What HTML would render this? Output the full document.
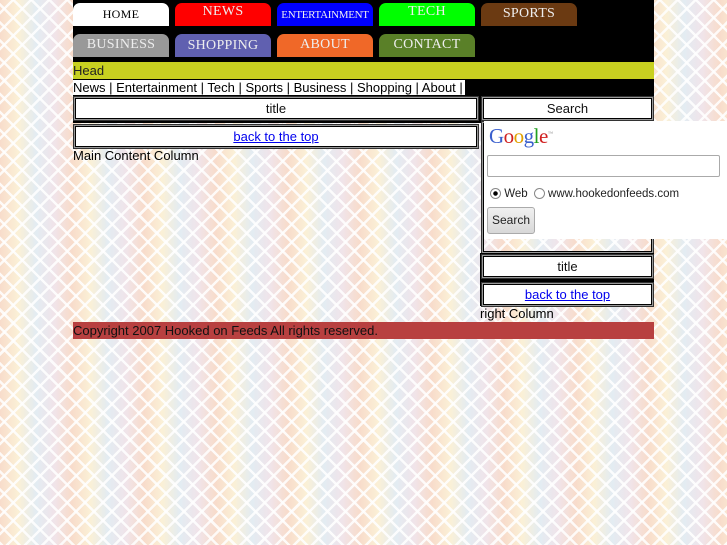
<!DOCTYPE html>
<html><head><style>
body{margin:0;width:727px;height:545px;overflow:hidden;font-family:"Liberation Sans",sans-serif;font-size:13px;
background-color:#f9ebe0;
background-image:repeating-linear-gradient(45deg,rgba(255,255,255,.85) 0 2.5px,transparent 2.5px 12.7px),repeating-linear-gradient(-45deg,rgba(255,255,255,.85) 0 2.5px,transparent 2.5px 12.7px),linear-gradient(90deg,#f8dccb,#fbf0d6,#e3ecf2,#f0e4ea,#f8dccb);
background-size:auto,auto,72px 72px;}
.wrap{position:absolute;left:73px;top:0;width:581px;}
.top{background:#000;height:62px;position:relative}
.tab{position:absolute;width:96px;height:23px;border-radius:7px 7px 0 0;font-family:"Liberation Serif",serif;color:#eee;text-align:center;font-size:14px;line-height:22px;letter-spacing:.3px;white-space:nowrap;overflow:hidden}
.head{background:#c8d020;height:17px;line-height:17px;color:#222}
.nav{background:#000;height:18px;line-height:18px}
.nav span{background:#fff;color:#000;padding-right:2px}
.box{position:absolute;background:#fff;border:1px solid #000;box-shadow:0 0 0 1px #999;outline:1px solid #333;outline-offset:1px;text-align:center;line-height:19px;color:#111}
a{color:#00e;}
</style></head><body>
<div class="wrap">
<div class="top">
<div class="tab" style="left:0;top:3px;background:#fff;color:#000;font-size:12px">HOME</div>
<div class="tab" style="left:102px;top:3px;background:#f00;line-height:18px">NEWS</div>
<div class="tab" style="left:204px;top:3px;background:#00f;font-size:11px;line-height:24px;letter-spacing:-.3px">ENTERTAINMENT</div>
<div class="tab" style="left:306px;top:3px;background:#0f0;line-height:18px">TECH</div>
<div class="tab" style="left:408px;top:3px;background:#6b3a12">SPORTS</div>
<div class="tab" style="left:0;top:34px;background:#999">BUSINESS</div>
<div class="tab" style="left:102px;top:34px;background:#6060b0;line-height:24px">SHOPPING</div>
<div class="tab" style="left:204px;top:34px;background:#f06828">ABOUT</div>
<div class="tab" style="left:306px;top:34px;background:#5a8028">CONTACT</div>
</div>
<div class="head">Head</div>
<div class="nav"><span>News | Entertainment | Tech | Sports | Business | Shopping | About |</span></div>
<div style="position:absolute;top:96px;left:0;width:581px;height:27px;background:#000"></div>
<div class="box" style="left:2px;top:98px;width:400px;height:19px">title</div>
<div class="box" style="left:2px;top:126px;width:400px;height:19px"><a href="#">back to the top</a></div>
<div style="position:absolute;left:0;top:148px">Main Content Column</div>
<div class="box" style="left:410px;top:98px;width:167px;height:19px">Search</div>
<div class="box" style="left:410px;top:123px;width:167px;height:127px;text-align:left;line-height:normal;background:transparent;white-space:nowrap"></div>
<div style="position:absolute;left:411px;top:121px;width:243px;height:118px;background:#fff;white-space:nowrap">
<div style="font-family:'Liberation Serif',serif;font-size:21px;margin:3px 0 0 5px;letter-spacing:-.5px"><span style="color:#3a5fcd">G</span><span style="color:#d02020">o</span><span style="color:#e0a000">o</span><span style="color:#3a5fcd">g</span><span style="color:#20a020">l</span><span style="color:#d02020">e</span><sup style="font-size:5px;color:#888">™</sup></div>
<div style="position:absolute;left:3px;top:34px;width:231px;height:20px;border:1px solid #aaa;border-radius:2px;background:#fff"></div>
<div style="position:absolute;left:6px;top:67px;font-size:11.5px;color:#222"><span style="display:inline-block;width:9px;height:9px;border:1px solid #888;border-radius:50%;vertical-align:-2px;background:radial-gradient(#000 2px,#fff 2.5px)"></span> Web <span style="display:inline-block;width:9px;height:9px;border:1px solid #888;border-radius:50%;vertical-align:-2px;margin-left:3px"></span> www.hookedonfeeds.com</div>
<div style="position:absolute;left:3px;top:86px;width:46px;height:25px;border:1px solid #aaa;border-radius:3px;background:linear-gradient(#f0f0f0,#d8d8d8);font-size:12px;line-height:25px;text-align:center;color:#222">Search</div>
</div>
<div style="position:absolute;top:253px;left:407px;width:174px;height:53px;background:#000"></div>
<div class="box" style="left:410px;top:256px;width:167px;height:19px">title</div>
<div class="box" style="left:410px;top:284px;width:167px;height:19px"><a href="#">back to the top</a></div>
<div style="position:absolute;left:407px;top:306px;line-height:15px">right Column</div>
<div style="position:absolute;left:0;top:322px;width:581px;height:17px;background:#b84040;line-height:17px;color:#111">Copyright 2007 Hooked on Feeds All rights reserved.</div>
</div>
</body></html>
